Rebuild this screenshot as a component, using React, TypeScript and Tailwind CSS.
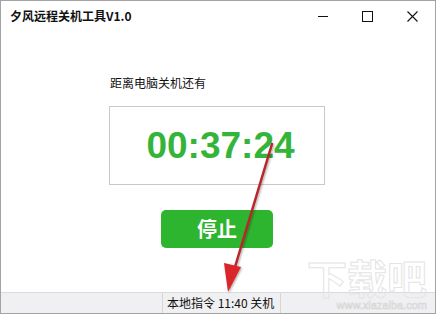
import React from "react";

const font = { fontFamily: '"Microsoft YaHei", "Noto Sans CJK SC", sans-serif' };

const App = () => {
  return (
    <div
      className="relative w-[436px] h-[314px] bg-white border border-[#a3a3a3] flex flex-col overflow-hidden text-[#111]"
      style={font}
    >
      {/* 标题栏 */}
      <div className="h-[30px] flex items-center justify-between shrink-0">
        <span className="pl-[9px] text-[12px] font-bold leading-none">夕风远程关机工具V1.0</span>
        <div className="flex items-center h-full">
          <div className="w-[44px] h-full flex items-center justify-center">
            <div className="w-[10px] h-px bg-[#111]" />
          </div>
          <div className="w-[44px] h-full flex items-center justify-center">
            <div className="w-[11px] h-[11px] border border-[#111]" />
          </div>
          <div className="w-[46px] h-full flex items-center justify-center">
            <svg width="11" height="11" viewBox="0 0 11 11">
              <path d="M0.5 0.5 L10.5 10.5 M10.5 0.5 L0.5 10.5" stroke="#111" strokeWidth="1.1" />
            </svg>
          </div>
        </div>
      </div>

      {/* 内容 */}
      <div className="flex-1 pl-[108px]">
        <div className="w-[216px] flex flex-col items-center">
          <div className="self-start mt-[44px] text-[12px] leading-[16px] pl-px">距离电脑关机还有</div>
          <div className="mt-[15px] w-[216px] h-[79px] border border-[#c9c9c9] flex items-center justify-center pl-[7px]">
            <span
              className="text-[37px] font-bold text-[#35b43a] leading-none"
              style={{ fontFamily: '"Liberation Sans", Arial, sans-serif' }}
            >
              00:37:24
            </span>
          </div>
          <button className="mt-[25px] w-[112px] h-[38px] rounded-[5px] bg-[#2eb52f] text-white text-[20px] font-bold flex items-center justify-center">
            停止
          </button>
        </div>
      </div>

      {/* 状态栏 */}
      <div className="h-[21px] shrink-0 border-t border-[#dadada] bg-[#f0eff2] flex">
        <div className="ml-[161px] w-[119px] h-full border-l border-r border-[#d6d6d6] flex items-center pl-[4px] text-[12px] leading-none">
          本地指令 11:40 关机
        </div>
      </div>

      {/* 水印 */}
      <div className="absolute left-[306px] top-[256px] flex flex-col items-end pointer-events-none select-none">
        <span className="text-[40px] font-bold leading-none text-transparent [-webkit-text-stroke:1px_#e4e4e4]">下载吧</span>
        <span
          className="text-[11px] leading-none mt-[3px] text-transparent [-webkit-text-stroke:0.6px_#d6d6d6]"
          style={{ fontFamily: '"Liberation Sans", Arial, sans-serif' }}
        >
          www.xiazaiba.com
        </span>
      </div>

      {/* 标注箭头 */}
      <svg className="absolute left-0 top-0 pointer-events-none" width="436" height="314">
        <defs>
          <filter id="sh" x="-20%" y="-20%" width="140%" height="140%">
            <feDropShadow dx="1" dy="1" stdDeviation="1" floodColor="#000" floodOpacity="0.35" />
          </filter>
        </defs>
        <g filter="url(#sh)">
          <line x1="271" y1="143" x2="234" y2="266" stroke="#b8262a" strokeWidth="2.5" strokeLinecap="round" />
          <polygon points="227,291 223,262 240,266" fill="#d8252b" />
        </g>
      </svg>
    </div>
  );
};

export default App;
